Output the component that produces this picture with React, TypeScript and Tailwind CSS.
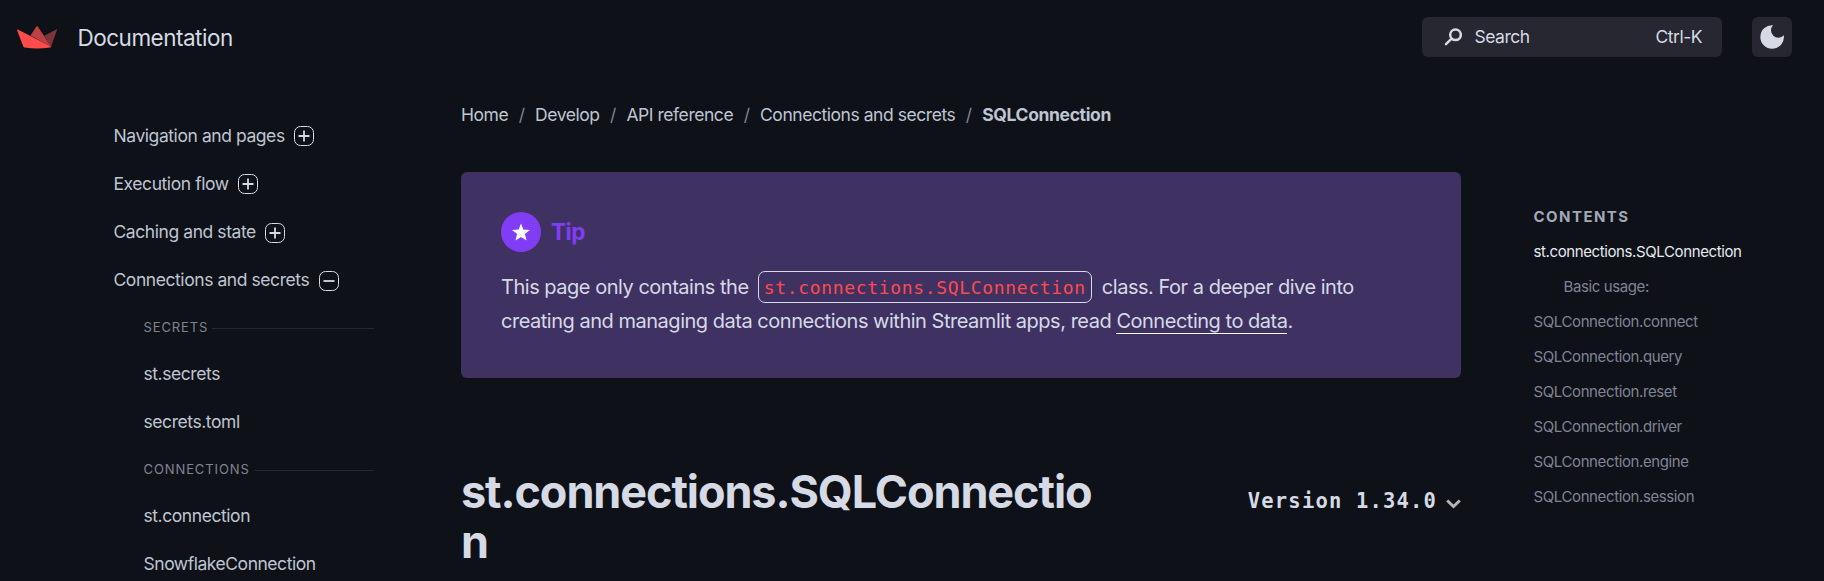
import React from "react";

function Logo() {
  return (
    <svg className="h-[23px] w-10 shrink-0" viewBox="0 0 40 23">
      <path d="M39.3 3.4C39.8 3.2 40.2 3.5 40 4L34 20.8 27.2 9.8Z" fill="#7d353b" />
      <path d="M19.4 0.6C19.8 0.1 20.4 0.1 20.8 0.6L34 20.6 13.5 9.6Z" fill="#bd4043" />
      <path d="M0 4C0 3.5 0.4 3.3 0.8 3.4L34 20.6C33.8 21.2 33.5 21.5 33 21.6Q20 23.3 7.5 21.6C7 21.5 6.6 21.2 6.4 20.7Z" fill="#ff4b4b" />
    </svg>
  );
}

function Toggle({ open }: { open?: boolean }) {
  return (
    <svg className="h-5 w-5 shrink-0" viewBox="0 0 20 20" fill="none" stroke="#d5dae5">
      <rect x="0.5" y="0.5" width="19" height="19" rx="6" />
      <path d={open ? "M4.5 10H15.5" : "M4.5 10H15.5M10 4.5V15.5"} strokeWidth="1.8" />
    </svg>
  );
}

function NavItem({ label, open }: { label: string; open?: boolean }) {
  return (
    <li className="flex h-[48.3px] items-center gap-[9.5px]">
      <span className="pb-px">{label}</span>
      <Toggle open={open} />
    </li>
  );
}

function Section({ label }: { label: string }) {
  return (
    <li className="flex h-[46px] items-center gap-[4px] text-[13px] tracking-[0.9px] text-[#808495]">
      <span>{label}</span>
      <span className="h-px flex-1 bg-[#262730]" />
    </li>
  );
}

const crumbs = ["Home", "Develop", "API reference", "Connections and secrets"];
const methods = ["connect", "query", "reset", "driver", "engine", "session"];

export default function App() {
  return (
    <div className="h-[581px] w-[1824px] overflow-hidden bg-[#0e1117] font-['Inter',sans-serif] text-[#d5dae5]">
      <header className="flex h-[74px] items-center pl-[17px] pr-8">
        <Logo />
        <span className="ml-[20.5px] pt-0.5 text-[22.5px] tracking-[-0.5px]">Documentation</span>
        <div className="ml-auto flex h-10 w-[300px] items-center rounded-md bg-[#262730] pl-[22px] pr-5 text-[17.5px] tracking-[-0.5px]">
          <svg className="h-[18px] w-[18px]" viewBox="0 0 18 18" fill="none" stroke="#d5dae5" strokeWidth="2.5" strokeLinecap="round">
            <circle cx="11.5" cy="6.8" r="5.3" />
            <path d="M7.6 10.7 2 16.2" />
          </svg>
          <span className="ml-[12.5px]">Search</span>
          <span className="ml-auto">Ctrl-K</span>
        </div>
        <div className="ml-[30px] flex h-10 w-10 items-center justify-center rounded-md bg-[#262730]">
          <svg className="h-6 w-6" viewBox="0 0 24 24">
            <path d="M13 0.2A11.8 11.8 0 1 0 23.8 10.3A7.2 7.2 0 1 1 13 0.2Z" fill="#d5dae5" />
          </svg>
        </div>
      </header>

      <div className="flex">
        <ul className="w-[374px] shrink-0 pl-[113.5px] pt-[38px] text-[17.5px] tracking-[-0.43px] text-[#bfc5d3]">
          <NavItem label="Navigation and pages" />
          <NavItem label="Execution flow" />
          <NavItem label="Caching and state" />
          <NavItem label="Connections and secrets" open />
          <li>
            <ul className="pl-[30px]">
              <Section label="SECRETS" />
              <li className="flex h-12 items-center pb-0.5">st.secrets</li>
              <li className="flex h-12 items-center pb-0.5">secrets.toml</li>
              <Section label="CONNECTIONS" />
              <li className="flex h-12 items-center pb-0.5">st.connection</li>
              <li className="flex h-12 items-center pb-0.5 tracking-[-0.47px]">SnowflakeConnection</li>
            </ul>
          </li>
        </ul>

        <main className="ml-[87px] w-[1000px] shrink-0 pt-[27px]">
          <nav className="flex h-7 items-center gap-[10.5px] text-[17.5px] tracking-[-0.45px] text-[#bfc5d3]">
            {crumbs.map((c) => (
              <React.Fragment key={c}>
                <span>{c}</span>
                <span className="text-[#808495]">/</span>
              </React.Fragment>
            ))}
            <b className="tracking-[-0.36px]">SQLConnection</b>
          </nav>

          <section className="mt-[43px] h-[206px] rounded-md bg-[#403163] px-10 pt-10">
            <div className="flex h-10 items-center gap-[10px]">
              <span className="flex h-10 w-10 items-center justify-center rounded-full bg-[#803df5]">
                <svg className="h-[18px] w-[18px]" viewBox="0 0 18 17" fill="#fff">
                  <path d="M9 0 11.3 5.9 18 6.4 12.9 10.4 14.6 17 9 13.4 3.4 17 5.1 10.4 0 6.4 6.7 5.9Z" />
                </svg>
              </span>
              <b className="text-[22.5px] tracking-[-0.4px] text-[#803df5]">Tip</b>
            </div>
            <p className="mt-[18px] whitespace-nowrap text-[20px] leading-[34px] tracking-[-0.48px]">
              This page only contains the{" "}
              <code className="ml-1 mr-[5px] rounded-[7px] border border-[#d5dae5] px-[5px] pb-1 pt-[5px] font-['DejaVu_Sans_Mono',monospace] text-[18px] leading-none tracking-[0.66px] text-[#ff4b4b]">st.connections.SQLConnection</code>{" "}
              class. For a deeper dive into
              <br />
              creating and managing data connections within Streamlit apps, read{" "}
              <a className="border-b border-white">Connecting to data</a>.
            </p>
          </section>

          <div className="mt-[89px] flex items-start justify-between">
            <h1 className="w-[640px] break-all text-[45px] font-bold leading-[50px] tracking-[-1.08px]">
              st.connections.SQLConnection
            </h1>
            <div className="mt-[19px] flex items-center gap-[9px] font-['DejaVu_Sans_Mono',monospace] text-[20.5px] font-bold leading-[30px] tracking-[1.17px]">
              <span>Version 1.34.0</span>
              <svg className="mt-[5px] h-[10px] w-[15px]" viewBox="0 0 15 10" fill="none" stroke="#b5b5b5" strokeWidth="3">
                <path d="M1.2 1.5 7.5 7.5 13.8 1.5" />
              </svg>
            </div>
          </div>
        </main>

        <aside className="ml-[72.5px] pt-[124.5px] text-[15px] tracking-[-0.39px] text-[#808495]">
          <h4 className="h-[35px] text-[15px] font-bold leading-[35px] tracking-[1.45px] text-[#a3a8b8]">CONTENTS</h4>
          <ul className="leading-[35px]">
            <li className="text-[#e6eaf1]">st.connections.SQLConnection</li>
            <li className="pl-[30px]">Basic usage:</li>
            {methods.map((m) => (
              <li key={m}>SQLConnection.{m}</li>
            ))}
          </ul>
        </aside>
      </div>
    </div>
  );
}
